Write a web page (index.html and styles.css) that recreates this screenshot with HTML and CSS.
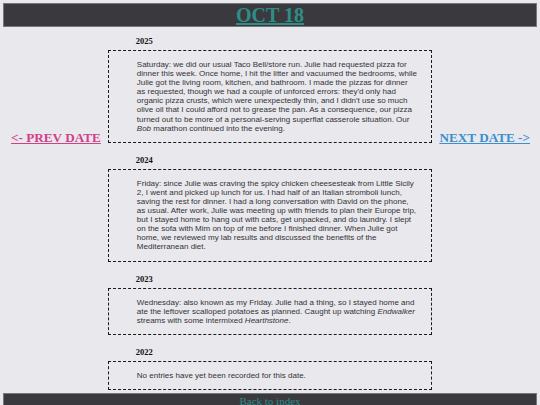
FILE: index.html
```html
<!DOCTYPE html>
<html lang="en">
<head>
    <meta charset="UTF-8">
    <meta name="viewport" content="width=device-width, initial-scale=1.0">
    <title>Oct 18</title>
    <link rel="stylesheet" href="styles.css">
</head>
<body>
    <header class="topbar">
        <h1><a href="#">OCT 18</a></h1>
    </header>

    <div class="layout">
        <div class="side">
            <a class="prev" href="#">&lt;- PREV DATE</a>
        </div>

        <main class="entries">
            <section class="entry">
                <h2>2025</h2>
                <div class="entry-box">
                    <p>Saturday: we did our usual Taco Bell/store run. Julie had requested pizza for dinner this week. Once home, I hit the litter and vacuumed the bedrooms, while Julie got the living room, kitchen, and bathroom. I made the pizzas for dinner as requested, though we had a couple of unforced errors: they'd only had organic pizza crusts, which were unexpectedly thin, and I didn't use so much olive oil that I could afford not to grease the pan. As a consequence, our pizza turned out to be more of a personal-serving superflat casserole situation. Our <em>Bob</em> marathon continued into the evening.</p>
                </div>
            </section>

            <section class="entry">
                <h2>2024</h2>
                <div class="entry-box">
                    <p>Friday: since Julie was craving the spicy chicken cheesesteak from Little Sicily 2, I went and picked up lunch for us. I had half of an Italian stromboli lunch, saving the rest for dinner. I had a long conversation with David on the phone, as usual. After work, Julie was meeting up with friends to plan their Europe trip, but I stayed home to hang out with cats, get unpacked, and do laundry. I slept on the sofa with Mim on top of me before I finished dinner. When Julie got home, we reviewed my lab results and discussed the benefits of the Mediterranean diet.</p>
                </div>
            </section>

            <section class="entry">
                <h2>2023</h2>
                <div class="entry-box">
                    <p>Wednesday: also known as my Friday. Julie had a thing, so I stayed home and ate the leftover scalloped potatoes as planned. Caught up watching <em>Endwalker</em> streams with some intermixed <em>Hearthstone</em>.</p>
                </div>
            </section>

            <section class="entry">
                <h2>2022</h2>
                <div class="entry-box">
                    <p>No entries have yet been recorded for this date.</p>
                </div>
            </section>
        </main>

        <div class="side">
            <a class="next" href="#">NEXT DATE -&gt;</a>
        </div>
    </div>

    <footer class="bottombar">
        <a href="#">Back to index</a>
    </footer>
</body>
</html>
```

FILE: styles.css
```css
:root {
    --bg: #e9e8ed;
    --bar: #3a393e;
    --bar-edge: #77767c;
    --teal: #2f8d88;
    --pink: #d2408a;
    --blue: #3b8fce;
    --text: #333336;
}
body {
    margin: 3px;
    background-color: var(--bg);
    font-family: 'Liberation Serif', 'Times New Roman', serif;
}
.topbar {
    background: var(--bar);
    border: 1px solid var(--bar-edge);
    text-align: center;
}
.topbar h1 {
    margin: 0;
    font-size: 20px;
    line-height: 22px;
}
.topbar a {
    color: var(--teal);
}
.layout {
    display: flex;
    gap: 7px;
    padding: 0 7px 0 8px;
}
.side {
    flex: none;
    padding-top: 101px;
}
.side a {
    font-size: 13.2px;
    font-weight: bold;
    line-height: 15px;
}
.prev {
    color: var(--pink);
}
.next {
    color: var(--blue);
}
.entries {
    flex: 1;
}
.entry h2 {
    margin: 12px 0 4px 28px;
    font-size: 8.5px;
    line-height: 10px;
    color: #111;
}
.entry:first-child h2 {
    margin-top: 9px;
}
.entry-box {
    border: 1px dashed #1a1a1a;
    padding: 9px 14px 9px 28px;
}
.entry-box p {
    margin: 0;
    font-family: 'Liberation Sans', Arial, sans-serif;
    font-size: 8px;
    line-height: 9.1px;
    color: var(--text);
}
.bottombar {
    margin-top: 3px;
    background: var(--bar);
    border: 1px solid var(--bar-edge);
    text-align: center;
    font-size: 11px;
    line-height: 14px;
}
.bottombar a {
    color: var(--teal);
}
```
